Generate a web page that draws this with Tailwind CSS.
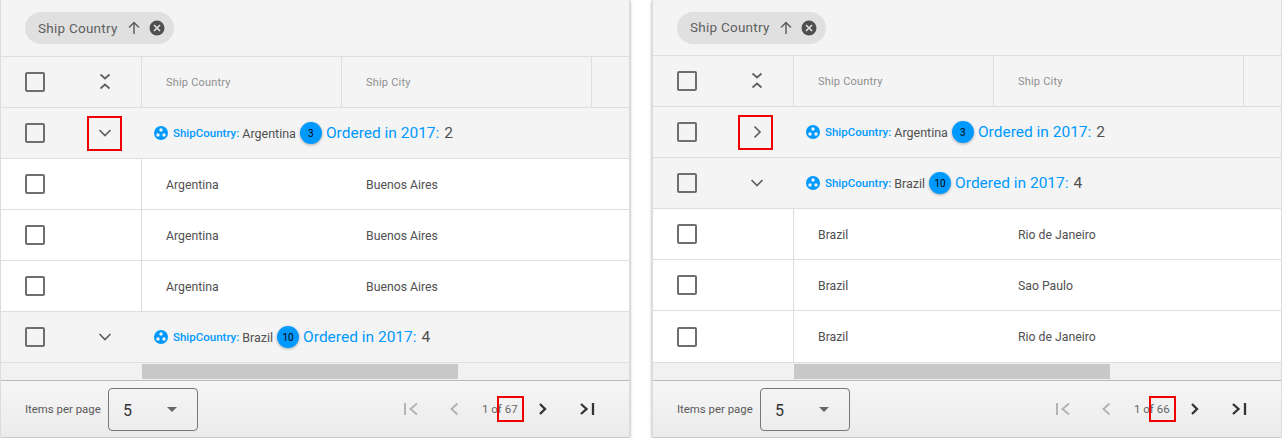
<!DOCTYPE html>
<html lang="en">
<head>
    <meta charset="UTF-8">
    <title>Grid grouping</title>
    <script src="https://cdn.jsdelivr.net/npm/@tailwindcss/browser@4"></script>
</head>
<body class="bg-white w-[1282px] h-[438px] overflow-hidden font-['Roboto',sans-serif]">
<div class="flex gap-[22px] h-[438px]">

    <!-- left grid -->
    <div class="relative w-[630px] h-[437px] flex flex-col border-l border-r border-[#dcdcdc] bg-[#f4f4f4] shadow-[0_1px_3px_rgba(0,0,0,0.35)]">
        <div class="h-[57px] shrink-0 flex items-center pl-[24px] border-b border-[#dedede]">
            <div class="h-[32px] w-[149px] rounded-full bg-[#e0e0e0] flex items-center pl-[13px] text-[13.5px] text-[#5f5f5f] tracking-[0.25px]">
                <span class="w-[88px]">Ship Country</span>
                <svg width="16" height="16" viewBox="0 0 16 16" fill="none" stroke="#5a5a5a" stroke-width="1.4"><path d="M8 14V2.500M3 7.500l5-5 5 5"/></svg>
                <svg class="ml-[7px]" width="16" height="16" viewBox="0 0 16 16"><circle cx="8" cy="8" r="7.500" fill="#4f4f4f"/><path d="M5 5l6 6M11 5l-6 6" stroke="#e0e0e0" stroke-width="1.700"/></svg>
            </div>
        </div>
        <div class="h-[51px] shrink-0 flex border-b border-[#dedede] text-[11px] text-[#8f8f8f] tracking-[0.2px]">
            <div class="w-[141px] shrink-0 flex items-center border-r border-[#dedede]">
                <span class="ml-[24px] w-[20px] h-[20px] border-2 border-[#6e6e6e] rounded-[2px]"></span>
                <svg class="ml-[54px]" width="12" height="18" viewBox="0 0 12 18" fill="none" stroke="#5f5f5f" stroke-width="1.700"><path d="M1.500 1.500L6 5.500l4.500-4M1.500 15.500L6 11.500l4.500 4"/></svg>
            </div>
            <div class="w-[200px] shrink-0 flex items-center pl-[24px] pt-[2px] border-r border-[#dedede]">Ship Country</div>
            <div class="w-[250px] shrink-0 flex items-center pl-[24px] pt-[2px] border-r border-[#dedede]">Ship City</div>
        </div>

        <div class="h-[51px] shrink-0 flex items-center border-b border-[#dedede]">
            <span class="ml-[24px] w-[20px] h-[20px] border-2 border-[#6e6e6e] rounded-[2px]"></span>
            <svg class="ml-[52px] w-[16px]" height="10" viewBox="0 0 16 10" fill="none" stroke="#5f5f5f" stroke-width="1.700"><path d="M2.500 2l5.500 5.500L13.500 2"/></svg>
            <svg class="ml-[41px]" width="14" height="14" viewBox="0 0 14 14"><circle cx="7" cy="7" r="7" fill="#0099ff"/><circle cx="7" cy="4" r="1.700" fill="#f4f4f4"/><circle cx="4" cy="9" r="1.700" fill="#f4f4f4"/><circle cx="10" cy="9" r="1.700" fill="#f4f4f4"/></svg>
            <span class="ml-[5px] mt-[2px] text-[11.500px] font-medium text-[#0099ff]">ShipCountry:</span>
            <span class="ml-[3px] mt-[2px] text-[12.500px] text-[#505050]">Argentina</span>
            <span class="ml-[4px] w-[22px] h-[22px] rounded-full bg-[#0099ff] shadow-[0_1px_3px_rgba(0,0,0,0.3)] flex items-center justify-center text-[10px] text-black">3</span>
            <span class="ml-[4px] mt-[2px] text-[15.500px] text-[#0099ff]">Ordered in 2017:</span>
            <span class="ml-[5px] mt-[2px] text-[15.500px] text-[#505050]">2</span>
        </div>

        <div class="h-[51px] shrink-0 flex bg-white border-b border-[#dedede] text-[12.250px] text-[#505050]">
            <div class="w-[141px] shrink-0 flex items-center border-r border-[#dedede]"><span class="ml-[24px] w-[20px] h-[20px] border-2 border-[#6e6e6e] rounded-[2px]"></span></div>
            <div class="w-[200px] shrink-0 flex items-center pl-[24px] pt-[2px]">Argentina</div>
            <div class="flex items-center pl-[24px] pt-[2px]">Buenos Aires</div>
        </div>
        <div class="h-[51px] shrink-0 flex bg-white border-b border-[#dedede] text-[12.250px] text-[#505050]">
            <div class="w-[141px] shrink-0 flex items-center border-r border-[#dedede]"><span class="ml-[24px] w-[20px] h-[20px] border-2 border-[#6e6e6e] rounded-[2px]"></span></div>
            <div class="w-[200px] shrink-0 flex items-center pl-[24px] pt-[2px]">Argentina</div>
            <div class="flex items-center pl-[24px] pt-[2px]">Buenos Aires</div>
        </div>
        <div class="h-[51px] shrink-0 flex bg-white border-b border-[#dedede] text-[12.250px] text-[#505050]">
            <div class="w-[141px] shrink-0 flex items-center border-r border-[#dedede]"><span class="ml-[24px] w-[20px] h-[20px] border-2 border-[#6e6e6e] rounded-[2px]"></span></div>
            <div class="w-[200px] shrink-0 flex items-center pl-[24px] pt-[2px]">Argentina</div>
            <div class="flex items-center pl-[24px] pt-[2px]">Buenos Aires</div>
        </div>

        <div class="h-[51px] shrink-0 flex items-center border-b border-[#dedede]">
            <span class="ml-[24px] w-[20px] h-[20px] border-2 border-[#6e6e6e] rounded-[2px]"></span>
            <svg class="ml-[52px] w-[16px]" height="10" viewBox="0 0 16 10" fill="none" stroke="#5f5f5f" stroke-width="1.700"><path d="M2.500 2l5.500 5.500L13.500 2"/></svg>
            <svg class="ml-[41px]" width="14" height="14" viewBox="0 0 14 14"><circle cx="7" cy="7" r="7" fill="#0099ff"/><circle cx="7" cy="4" r="1.700" fill="#f4f4f4"/><circle cx="4" cy="9" r="1.700" fill="#f4f4f4"/><circle cx="10" cy="9" r="1.700" fill="#f4f4f4"/></svg>
            <span class="ml-[5px] mt-[2px] text-[11.500px] font-medium text-[#0099ff]">ShipCountry:</span>
            <span class="ml-[3px] mt-[2px] text-[12.500px] text-[#505050]">Brazil</span>
            <span class="ml-[4px] w-[22px] h-[22px] rounded-full bg-[#0099ff] shadow-[0_1px_3px_rgba(0,0,0,0.3)] flex items-center justify-center text-[10px] text-black">10</span>
            <span class="ml-[4px] mt-[2px] text-[15.500px] text-[#0099ff]">Ordered in 2017:</span>
            <span class="ml-[5px] mt-[2px] text-[15.500px] text-[#505050]">4</span>
        </div>

        <div class="h-[18px] shrink-0 bg-[#f1f1f1] border-b border-[#b8b8b8] pl-[141px] pb-[1px] pt-[1px]">
            <div class="w-[316px] h-full bg-[#c8c8c8]"></div>
        </div>

        <div class="flex-1 flex items-center bg-gradient-to-b from-[#f6f6f6] to-[#ebebeb] text-[11.400px] text-[#5a5a5a]">
            <span class="ml-[24px] w-[83px] pt-[1px]">Items per page</span>
            <div class="w-[90px] h-[43px] border border-[#777] rounded-[4px] flex items-center pl-[14px] text-[16px] text-[#333]">
                <span class="w-[44px] pt-[3px]">5</span>
                <span class="border-x-[5.500px] border-x-transparent border-t-[5.500px] border-t-[#666]"></span>
            </div>
            <div class="ml-[205px] flex items-center">
                <svg width="16" height="14" viewBox="0 0 16 14" fill="none" stroke="#b4b4b4" stroke-width="2"><path d="M2 1v12M14 1.500L7.500 7l6.500 5.500"/></svg>
                <svg class="ml-[30px]" width="10" height="14" viewBox="0 0 10 14" fill="none" stroke="#b4b4b4" stroke-width="2"><path d="M8.500 1.500L2.500 7l6 5.500"/></svg>
                <span class="ml-[23px] w-[56px] pt-[2px] text-[11.500px] text-[#666]">1 of 67</span>
                <svg width="10" height="14" viewBox="0 0 10 14" fill="none" stroke="#333" stroke-width="2.300"><path d="M2 2l5 5-5 5"/></svg>
                <svg class="ml-[31px]" width="16" height="14" viewBox="0 0 16 14" fill="none" stroke="#333" stroke-width="2.300"><path d="M14 1v12M2 2l5.500 5L2 12"/></svg>
            </div>
        </div>

        <!-- red annotation boxes -->
        <div class="absolute left-[86px] top-[116px] w-[35px] h-[35px] border-2 border-[#f00000]"></div>
        <div class="absolute left-[496px] top-[396px] w-[27px] h-[26px] border-2 border-[#f00000]"></div>
    </div>

    <!-- right grid -->
    <div class="relative w-[630px] h-[437px] flex flex-col border-l border-r border-[#dcdcdc] bg-[#f4f4f4] shadow-[0_1px_3px_rgba(0,0,0,0.35)]">
        <div class="h-[56px] shrink-0 flex items-center pl-[24px] border-b border-[#dedede]">
            <div class="h-[32px] w-[149px] rounded-full bg-[#e0e0e0] flex items-center pl-[13px] text-[13.5px] text-[#5f5f5f] tracking-[0.25px]">
                <span class="w-[88px]">Ship Country</span>
                <svg width="16" height="16" viewBox="0 0 16 16" fill="none" stroke="#5a5a5a" stroke-width="1.4"><path d="M8 14V2.500M3 7.500l5-5 5 5"/></svg>
                <svg class="ml-[7px]" width="16" height="16" viewBox="0 0 16 16"><circle cx="8" cy="8" r="7.500" fill="#4f4f4f"/><path d="M5 5l6 6M11 5l-6 6" stroke="#e0e0e0" stroke-width="1.700"/></svg>
            </div>
        </div>
        <div class="h-[51px] shrink-0 flex border-b border-[#dedede] text-[11px] text-[#8f8f8f] tracking-[0.2px]">
            <div class="w-[141px] shrink-0 flex items-center border-r border-[#dedede]">
                <span class="ml-[24px] w-[20px] h-[20px] border-2 border-[#6e6e6e] rounded-[2px]"></span>
                <svg class="ml-[54px]" width="12" height="18" viewBox="0 0 12 18" fill="none" stroke="#5f5f5f" stroke-width="1.700"><path d="M1.500 1.500L6 5.500l4.500-4M1.500 15.500L6 11.500l4.500 4"/></svg>
            </div>
            <div class="w-[200px] shrink-0 flex items-center pl-[24px] pt-[2px] border-r border-[#dedede]">Ship Country</div>
            <div class="w-[250px] shrink-0 flex items-center pl-[24px] pt-[2px] border-r border-[#dedede]">Ship City</div>
        </div>

        <div class="h-[51px] shrink-0 flex items-center border-b border-[#dedede]">
            <span class="ml-[24px] w-[20px] h-[20px] border-2 border-[#6e6e6e] rounded-[2px]"></span>
            <svg class="ml-[52px] w-[16px]" height="16" viewBox="0 0 16 16" fill="none" stroke="#5f5f5f" stroke-width="1.700"><path d="M5.500 2.500L11 8l-5.500 5.500"/></svg>
            <svg class="ml-[41px]" width="14" height="14" viewBox="0 0 14 14"><circle cx="7" cy="7" r="7" fill="#0099ff"/><circle cx="7" cy="4" r="1.700" fill="#f4f4f4"/><circle cx="4" cy="9" r="1.700" fill="#f4f4f4"/><circle cx="10" cy="9" r="1.700" fill="#f4f4f4"/></svg>
            <span class="ml-[5px] mt-[2px] text-[11.500px] font-medium text-[#0099ff]">ShipCountry:</span>
            <span class="ml-[3px] mt-[2px] text-[12.500px] text-[#505050]">Argentina</span>
            <span class="ml-[4px] w-[22px] h-[22px] rounded-full bg-[#0099ff] shadow-[0_1px_3px_rgba(0,0,0,0.3)] flex items-center justify-center text-[10px] text-black">3</span>
            <span class="ml-[4px] mt-[2px] text-[15.500px] text-[#0099ff]">Ordered in 2017:</span>
            <span class="ml-[5px] mt-[2px] text-[15.500px] text-[#505050]">2</span>
        </div>

        <div class="h-[51px] shrink-0 flex items-center border-b border-[#dedede]">
            <span class="ml-[24px] w-[20px] h-[20px] border-2 border-[#6e6e6e] rounded-[2px]"></span>
            <svg class="ml-[52px] w-[16px]" height="10" viewBox="0 0 16 10" fill="none" stroke="#5f5f5f" stroke-width="1.700"><path d="M2.500 2l5.500 5.500L13.500 2"/></svg>
            <svg class="ml-[41px]" width="14" height="14" viewBox="0 0 14 14"><circle cx="7" cy="7" r="7" fill="#0099ff"/><circle cx="7" cy="4" r="1.700" fill="#f4f4f4"/><circle cx="4" cy="9" r="1.700" fill="#f4f4f4"/><circle cx="10" cy="9" r="1.700" fill="#f4f4f4"/></svg>
            <span class="ml-[5px] mt-[2px] text-[11.500px] font-medium text-[#0099ff]">ShipCountry:</span>
            <span class="ml-[3px] mt-[2px] text-[12.500px] text-[#505050]">Brazil</span>
            <span class="ml-[4px] w-[22px] h-[22px] rounded-full bg-[#0099ff] shadow-[0_1px_3px_rgba(0,0,0,0.3)] flex items-center justify-center text-[10px] text-black">10</span>
            <span class="ml-[4px] mt-[2px] text-[15.500px] text-[#0099ff]">Ordered in 2017:</span>
            <span class="ml-[5px] mt-[2px] text-[15.500px] text-[#505050]">4</span>
        </div>

        <div class="h-[51px] shrink-0 flex bg-white border-b border-[#dedede] text-[12.250px] text-[#505050]">
            <div class="w-[141px] shrink-0 flex items-center border-r border-[#dedede]"><span class="ml-[24px] w-[20px] h-[20px] border-2 border-[#6e6e6e] rounded-[2px]"></span></div>
            <div class="w-[200px] shrink-0 flex items-center pl-[24px] pt-[2px]">Brazil</div>
            <div class="flex items-center pl-[24px] pt-[2px]">Rio de Janeiro</div>
        </div>
        <div class="h-[51px] shrink-0 flex bg-white border-b border-[#dedede] text-[12.250px] text-[#505050]">
            <div class="w-[141px] shrink-0 flex items-center border-r border-[#dedede]"><span class="ml-[24px] w-[20px] h-[20px] border-2 border-[#6e6e6e] rounded-[2px]"></span></div>
            <div class="w-[200px] shrink-0 flex items-center pl-[24px] pt-[2px]">Brazil</div>
            <div class="flex items-center pl-[24px] pt-[2px]">Sao Paulo</div>
        </div>
        <div class="h-[52px] shrink-0 flex bg-white border-b border-[#dedede] text-[12.250px] text-[#505050]">
            <div class="w-[141px] shrink-0 flex items-center border-r border-[#dedede]"><span class="ml-[24px] w-[20px] h-[20px] border-2 border-[#6e6e6e] rounded-[2px]"></span></div>
            <div class="w-[200px] shrink-0 flex items-center pl-[24px] pt-[2px]">Brazil</div>
            <div class="flex items-center pl-[24px] pt-[2px]">Rio de Janeiro</div>
        </div>

        <div class="h-[18px] shrink-0 bg-[#f1f1f1] border-b border-[#b8b8b8] pl-[141px] pb-[1px] pt-[1px]">
            <div class="w-[316px] h-full bg-[#c8c8c8]"></div>
        </div>

        <div class="flex-1 flex items-center bg-gradient-to-b from-[#f6f6f6] to-[#ebebeb] text-[11.400px] text-[#5a5a5a]">
            <span class="ml-[24px] w-[83px] pt-[1px]">Items per page</span>
            <div class="w-[90px] h-[43px] border border-[#777] rounded-[4px] flex items-center pl-[14px] text-[16px] text-[#333]">
                <span class="w-[44px] pt-[3px]">5</span>
                <span class="border-x-[5.500px] border-x-transparent border-t-[5.500px] border-t-[#666]"></span>
            </div>
            <div class="ml-[205px] flex items-center">
                <svg width="16" height="14" viewBox="0 0 16 14" fill="none" stroke="#b4b4b4" stroke-width="2"><path d="M2 1v12M14 1.500L7.500 7l6.500 5.500"/></svg>
                <svg class="ml-[30px]" width="10" height="14" viewBox="0 0 10 14" fill="none" stroke="#b4b4b4" stroke-width="2"><path d="M8.500 1.500L2.500 7l6 5.500"/></svg>
                <span class="ml-[23px] w-[56px] pt-[2px] text-[11.500px] text-[#666]">1 of 66</span>
                <svg width="10" height="14" viewBox="0 0 10 14" fill="none" stroke="#333" stroke-width="2.300"><path d="M2 2l5 5-5 5"/></svg>
                <svg class="ml-[31px]" width="16" height="14" viewBox="0 0 16 14" fill="none" stroke="#333" stroke-width="2.300"><path d="M14 1v12M2 2l5.500 5L2 12"/></svg>
            </div>
        </div>

        <div class="absolute left-[85px] top-[115px] w-[35px] h-[35px] border-2 border-[#f00000]"></div>
        <div class="absolute left-[496px] top-[396px] w-[27px] h-[26px] border-2 border-[#f00000]"></div>
    </div>
</div>
</body>
</html>
